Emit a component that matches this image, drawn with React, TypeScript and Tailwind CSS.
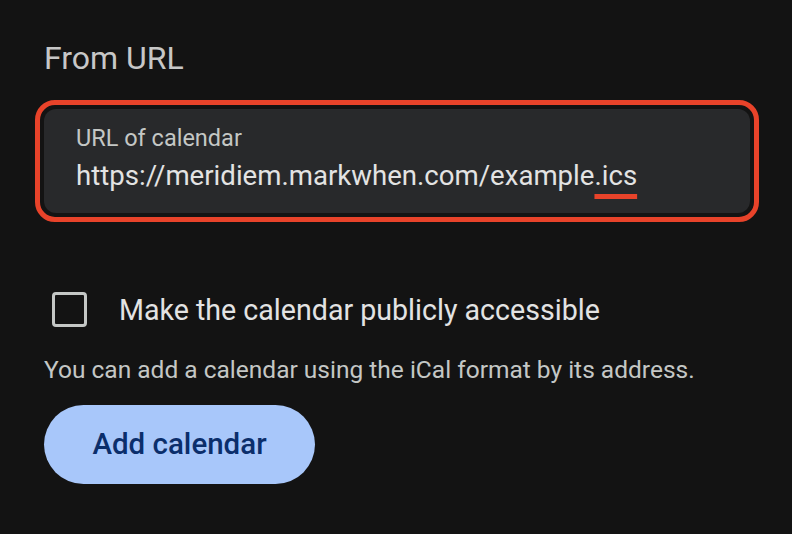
import React from "react";

export default function App() {
  return (
    <div
      className="w-[792px] h-[534px] bg-[#131313] overflow-hidden flex flex-col"
      style={{ fontFamily: "Roboto, 'Noto Sans', sans-serif" }}
    >
      <div className="pl-[44px] pt-[38px] text-[32px] leading-[40px] text-[#c7c7c7]">
        From URL
      </div>

      <div className="ml-[35px] mt-[22px] w-[724px] h-[122px] border-[5px] border-[#e8432a] rounded-[20px] p-[4px]">
        <div className="w-full h-full bg-[#28292b] rounded-[12px] pl-[32px] pt-[15px] flex flex-col">
          <div className="text-[23.5px] leading-[28px] text-[#c4c7c5]">URL of calendar</div>
          <div className="mt-[7px] text-[27.6px] leading-[34px] text-[#e3e3e3]">
            https://meridiem.markwhen.com/example
            <span className="underline decoration-[#e8432a] decoration-[5px] underline-offset-[9px]">
              .ics
            </span>
          </div>
        </div>
      </div>

      <div className="mt-[70px] pl-[52px] flex items-center gap-[32px]">
        <div className="w-[35px] h-[35px] border-[3px] border-[#c4c7c5] rounded-[4px]" />
        <div className="text-[28.6px] leading-[34px] text-[#e3e3e3]">
          Make the calendar publicly accessible
        </div>
      </div>

      <div className="mt-[28px] pl-[44px] text-[24.5px] leading-[30px] text-[#c4c7c5]">
        You can add a calendar using the iCal format by its address.
      </div>

      <div className="mt-[20px] ml-[44px]">
        <button className="w-[271px] h-[79px] rounded-full bg-[#a8c7fa] text-[#0b2e6b] text-[29.5px] font-medium flex items-center justify-center">
          Add calendar
        </button>
      </div>
    </div>
  );
}
